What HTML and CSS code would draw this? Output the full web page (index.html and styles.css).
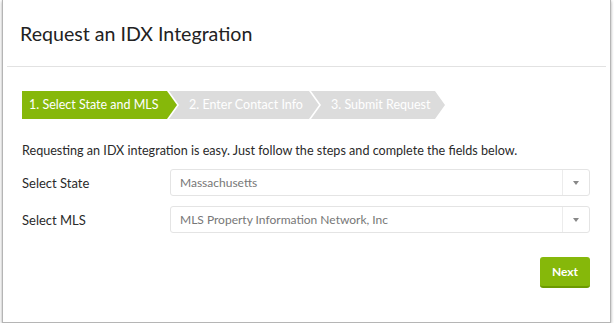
FILE: index.html
```html
<!DOCTYPE html>
<html>
<head>
<meta charset="utf-8">
<link rel="stylesheet" href="styles.css">
</head>
<body>
<div class="dialog">
  <div class="header">
    <h1 class="title">Request an IDX Integration</h1>
  </div>
  <div class="content">
    <div class="steps">
      <div class="step active">1. Select State and MLS</div>
      <div class="step">2. Enter Contact Info</div>
      <div class="step">3. Submit Request</div>
    </div>
    <p class="intro">Requesting an IDX integration is easy. Just follow the steps and complete the fields below.</p>
    <div class="row">
      <label class="label">Select State</label>
      <div class="select"><span class="value">Massachusetts</span><span class="caret"></span></div>
    </div>
    <div class="row">
      <label class="label">Select MLS</label>
      <div class="select"><span class="value">MLS Property Information Network, Inc</span><span class="caret"></span></div>
    </div>
    <div class="actions">
      <button class="btn">Next</button>
    </div>
  </div>
</div>
</body>
</html>
```
FILE: styles.css
```css
html, body {
  margin: 0;
  padding: 0;
  background: #fff;
}
body {
  font-family: Lato, "Liberation Sans", sans-serif;
  color: #333;
}
.dialog {
  margin-left: 2px;
  width: 609px;
  height: 323px;
  background: #fff;
  border: 1px solid #b5b5b5;
  border-top: none;
  box-shadow: 0 1px 3px rgba(0,0,0,0.35);
  box-sizing: border-box;
}
.header {
  margin: 0 4px;
  height: 67px;
  border-bottom: 1px solid #e2e2e2;
  box-sizing: border-box;
  padding: 22px 0 0 13px;
}
.title {
  margin: 0;
  font-weight: 400;
  font-size: 19.6px;
  line-height: 24px;
  color: #222;
}
.content {
  padding: 24px 20px 0 19px;
}
.steps {
  display: flex;
  height: 28px;
}
.step {
  position: relative;
  background: #dcdcdc;
  color: #fff;
  font-size: 12.5px;
  line-height: 28px;
  padding: 0 0 0 20px;
  box-sizing: border-box;
  clip-path: polygon(0 0, calc(100% - 10px) 0, 100% 50%, calc(100% - 10px) 100%, 0 100%, 10px 50%);
  margin-right: -8px;
}
.step:nth-child(1) { width: 155px; padding-left: 7px; clip-path: polygon(0 0, calc(100% - 10px) 0, 100% 50%, calc(100% - 10px) 100%, 0 100%); background: #86b80a; }
.step:nth-child(2) { width: 150px; }
.step:nth-child(3) { width: 134px; }
.intro {
  margin: 24px 0 0 0;
  font-size: 12.6px;
  line-height: 16px;
  color: #2a2a2a;
}
.row {
  display: flex;
  align-items: center;
  margin-top: 10px;
}
.row + .row { margin-top: 10px; }
.label {
  width: 148px;
  font-size: 13px;
  color: #2a2a2a;
}
.select {
  flex: 1;
  height: 27px;
  border: 1px solid #e4e4e4;
  border-radius: 3px;
  display: flex;
  align-items: center;
  box-sizing: border-box;
}
.value {
  flex: 1;
  padding-left: 9px;
  font-size: 12px;
  color: #777;
}
.caret {
  width: 26px;
  height: 100%;
  border-left: 1px solid #ececec;
  position: relative;
}
.caret::after {
  content: "";
  position: absolute;
  left: 10px;
  top: 11px;
  border-left: 3px solid transparent;
  border-right: 3px solid transparent;
  border-top: 4px solid #888;
}
.actions {
  display: flex;
  justify-content: flex-end;
  margin-top: 24px;
}
.btn {
  width: 50px;
  height: 31px;
  border: none;
  border-bottom: 2px solid #6c9a00;
  border-radius: 3px;
  background: #86b80a;
  color: #fff;
  font-family: Lato, "Liberation Sans", sans-serif;
  font-weight: 700;
  font-size: 12px;
  padding: 0;
}
```
